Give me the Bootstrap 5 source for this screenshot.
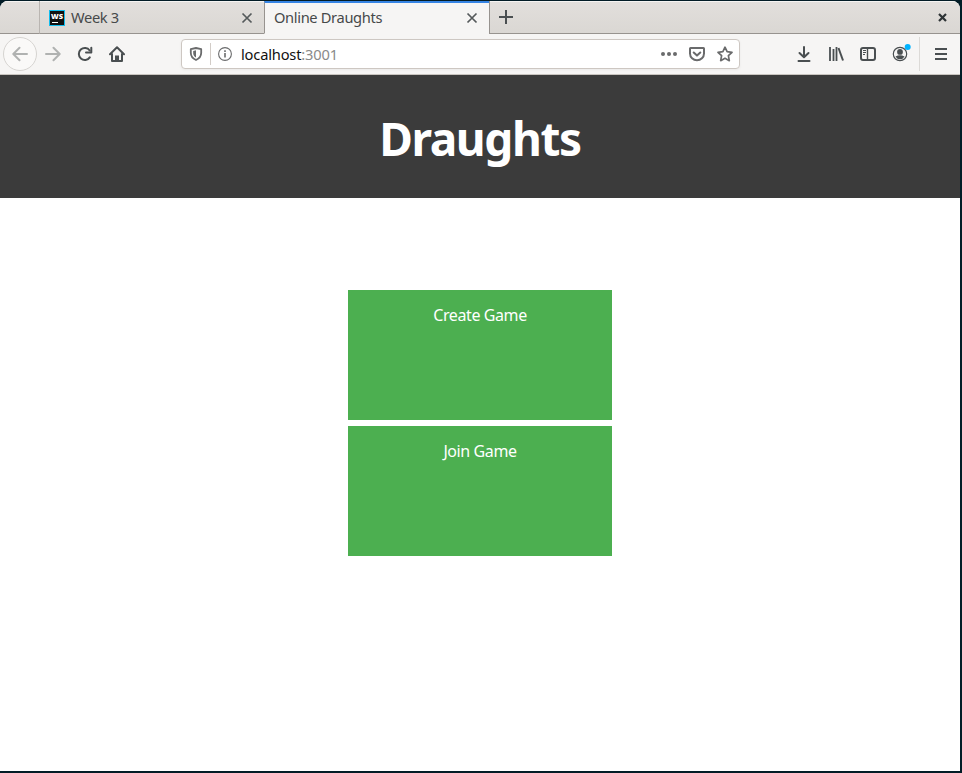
<!DOCTYPE html>
<html lang="en">
<head>
<meta charset="utf-8">
<meta name="viewport" content="width=device-width, initial-scale=1">
<title>Online Draughts</title>
<link rel="stylesheet" href="https://cdn.jsdelivr.net/npm/bootstrap@5.3.0/dist/css/bootstrap.min.css">
<style>
  body { background: #021c26; font-family: "Noto Sans", sans-serif; height: 773px; padding: 1px 2px 2px 0; }
  svg { display: block; flex: none; }
  .window { height: 770px; border-radius: 8px 8px 0 0; background: #fff; }
  .tabstrip { height: 33px; background: linear-gradient(#e2dfdc, #dad7d3); color: #46494a; font-size: 14.67px; box-shadow: inset 0 1px #f5f4f2; }
  .strip-edge { border-bottom: 1px solid #97938f; }
  .lead-space { width: 39px; }
  .tab { width: 225px; padding: 1px 11px 0 9px; border-left: 1px solid #b9b5b1; border-bottom: 1px solid #97938f; }
  .tab-open { padding: 0 11px 0 9px; background: #f6f5f4; border-bottom-color: #f6f5f4; border-left-color: #97938f; border-top: 2px solid #3584e4; }
  .tab-title { line-height: 20px; margin-top: -2px; white-space: nowrap; letter-spacing: -.35px; }
  .tab .tab-icon { margin-right: 6px; }
  .tab-rest { border-left: 1px solid #97938f; padding: 0 13px 0 9px; }
  .toolbar { height: 41px; background: #f6f5f4; border-bottom: 1px solid #c9c5c0; padding-left: 3px; color: #4a4f51; }
  .back { width: 34px; height: 34px; border: 1px solid #d6d4d1; border-radius: 50%; color: #b0b2b1; background: #faf9f8; }
  .slot { width: 32px; }
  .dim { color: #b0b2b1; }
  .urlbar { width: 559px; height: 30px; margin-left: 48px; padding: 0 6px 0 7px; border: 1px solid #cdc7c2; border-radius: 4px; background: #fff; color: #6a6b6c; box-shadow: 0 1px 3px #0000000d; }
  .url-sep { width: 1px; height: 22px; margin: 0 7px; background: #d2ccc7; }
  .url { margin-left: 9px; font-size: 14.67px; line-height: 20px; letter-spacing: -.18px; color: #111; }
  .port { color: #8a8a8a; }
  .pocket { margin: 0 11px; }
  .tools { margin-left: 48px; }
  .menu-sep { width: 1px; height: 34px; background: #dcdad7; margin-left: 3px; }
  .menu-slot { margin-left: 5px; }
  .banner { height: 123px; background: #3b3b3b; }
  .banner h1 { font-size: 46px; line-height: 60px; font-weight: 700; letter-spacing: -1.4px; margin: 2px 0 0; }
  .actions { width: 264px; margin-top: 92px; gap: 6px; }
  .game-btn { height: 130px; padding: 13px 32px; font-size: 16px; line-height: 24px; letter-spacing: -.4px; border: 0; border-radius: 0; background: #4caf50; color: #fff; }
  .game-btn:hover { background: #449f48; color: #fff; }
</style>
</head>
<body class="overflow-hidden">
<div class="window overflow-hidden">
  <div class="tabstrip d-flex">
    <div class="lead-space strip-edge"></div>
    <div class="tab d-flex align-items-center">
      <svg class="tab-icon" width="16" height="16" viewBox="0 0 16 16"><rect width="16" height="16" fill="#10bdef"/><rect x="1" y="1" width="14" height="14" fill="#111"/><text x="2" y="8.6" font-family="Open Sans, sans-serif" font-weight="800" font-size="7.6" textLength="12" lengthAdjust="spacingAndGlyphs" fill="#fff">WS</text><path d="M3 12.5h6" stroke="#fff"/></svg>
      <span class="tab-title">Week 3</span>
      <svg class="ms-auto" width="12" height="12" viewBox="0 0 12 12"><path d="M1.5 1.5l9 9M10.5 1.5l-9 9" stroke="#555a5b" stroke-width="1.7"/></svg>
    </div>
    <div class="tab tab-open d-flex align-items-center">
      <span class="tab-title">Online Draughts</span>
      <svg class="ms-auto" width="12" height="12" viewBox="0 0 12 12"><path d="M1.5 1.5l9 9M10.5 1.5l-9 9" stroke="#555a5b" stroke-width="1.7"/></svg>
    </div>
    <div class="tab-rest strip-edge flex-grow-1 d-flex align-items-center justify-content-between">
      <svg width="14" height="14" viewBox="0 0 14 14"><path d="M7 0v14M0 7h14" stroke="#4a4f51" stroke-width="2"/></svg>
      <svg width="9" height="9" viewBox="0 0 9 9"><path d="M1 1l7 7M8 1L1 8" stroke="#2e3436" stroke-width="2.2"/></svg>
    </div>
  </div>
  <div class="toolbar d-flex align-items-center">
    <div class="back d-flex align-items-center justify-content-center">
      <svg width="16" height="16" viewBox="0 0 16 16" fill="none" stroke="currentColor" stroke-width="2" stroke-linecap="round" stroke-linejoin="round"><path d="M15 8H2M7.5 1.8L1.3 8l6.2 6.2"/></svg>
    </div>
    <div class="slot dim d-flex justify-content-center">
      <svg width="16" height="16" viewBox="0 0 16 16" fill="none" stroke="currentColor" stroke-width="2" stroke-linecap="round" stroke-linejoin="round"><path d="M1 8h13M8.5 1.8L14.7 8l-6.2 6.2"/></svg>
    </div>
    <div class="slot d-flex justify-content-center">
      <svg width="16" height="16" viewBox="0 0 16 16" fill="none" stroke="currentColor" stroke-width="2"><path d="M12.8 11.4A6 6 0 1 1 12.7 4.5" stroke-linecap="round"/><path d="M14.3 1.8V6.6H9" stroke-linecap="round" stroke-linejoin="round"/></svg>
    </div>
    <div class="slot d-flex justify-content-center">
      <svg width="16" height="16" viewBox="0 0 16 16" fill="none" stroke="currentColor" stroke-width="2" stroke-linecap="round" stroke-linejoin="round"><path d="M1 8.3L8 1.3l7 7M3 8v7h10V8"/><path d="M6 15V9.5h4V15z" fill="currentColor" stroke="none"/></svg>
    </div>
    <div class="urlbar d-flex align-items-center">
      <svg width="14" height="14" viewBox="0 0 14 14"><path d="M7 1L1.8 2.2v3.6c0 3.4 2 5.8 5.2 7.2 3.2-1.4 5.2-3.8 5.2-7.2V2.2z" fill="none" stroke="currentColor" stroke-width="1.8" stroke-linejoin="round"/><path d="M7 3.3L4.2 4v2c0 2 1 3.5 2.8 4.5z" fill="currentColor"/></svg>
      <div class="url-sep"></div>
      <svg width="14" height="14" viewBox="0 0 14 14"><circle cx="7" cy="7" r="6.4" fill="none" stroke="currentColor" stroke-width="1.1"/><path d="M7 6v4.500M7 3.300v1.600" stroke="currentColor" stroke-width="1.6"/></svg>
      <span class="url">localhost<span class="port">:3001</span></span>
      <svg class="ms-auto" width="16" height="16" viewBox="0 0 16 16" fill="currentColor"><circle cx="2" cy="8" r="2"/><circle cx="8" cy="8" r="2"/><circle cx="14" cy="8" r="2"/></svg>
      <svg class="pocket" width="18" height="16" viewBox="-1 0 18 16" fill="none" stroke="currentColor" stroke-width="2" stroke-linecap="round" stroke-linejoin="round"><path d="M1.5 2h13q.5 0 .5.6V7.5a7 6.8 0 0 1-14 0V2.600Q1 2 1.500 2z"/><path d="M4.700 6.500L8 9.600l3.300-3.100"/></svg>
      <svg width="16" height="16" viewBox="0 0 16 16" fill="none" stroke="currentColor" stroke-width="1.7" stroke-linejoin="round"><path d="M8 1.200l2.100 4.500 4.900.6-3.600 3.400.9 5L8 12.300l-4.300 2.400.9-5L1 6.300l4.900-.6z"/></svg>
    </div>
    <div class="tools d-flex align-items-center">
      <div class="slot d-flex justify-content-center">
        <svg width="16" height="16" viewBox="0 0 16 16" fill="none" stroke="currentColor" stroke-width="2" stroke-linecap="round" stroke-linejoin="round"><path d="M8 1v10M3.500 7L8 11.300 12.500 7M2.500 15h11"/></svg>
      </div>
      <div class="slot d-flex justify-content-center">
        <svg width="16" height="16" viewBox="0 0 16 16" fill="none" stroke="currentColor" stroke-width="2"><path d="M2 1v14M5.500 3v12M8.500 1v14" stroke-width="1.8"/><path d="M10.500 2L15 14.500"/></svg>
      </div>
      <div class="slot d-flex justify-content-center">
        <svg width="16" height="16" viewBox="0 0 16 16" fill="none" stroke="currentColor" stroke-width="2"><rect x="1" y="2" width="14" height="12" rx="2"/><path d="M7.500 2v12" stroke-width="1.4"/><path d="M3 4.500h3M3 6.500h3M3 8.500h2" stroke-width="1"/></svg>
      </div>
      <div class="slot d-flex justify-content-center">
        <svg width="22" height="20" viewBox="-3 -2 22 20"><circle cx="8" cy="8" r="6.7" fill="none" stroke="currentColor" stroke-width="1.2"/><circle cx="8" cy="5.9" r="2.9" fill="currentColor"/><path d="M3.500 10.400q4.500-2.400 9 0Q11 13.200 8 13.200t-4.500-2.800z" fill="currentColor"/><circle cx="15.7" cy="1" r="3" fill="#00b3ff"/></svg>
      </div>
      <div class="menu-sep"></div>
      <div class="slot menu-slot d-flex justify-content-center">
        <svg width="12" height="12" viewBox="0 0 12 12"><path d="M0 1h12M0 6h12M0 11h12" stroke="currentColor" stroke-width="2"/></svg>
      </div>
    </div>
  </div>
  <header class="banner d-flex align-items-center justify-content-center text-white">
    <h1>Draughts</h1>
  </header>
  <main class="actions d-flex flex-column mx-auto">
    <button type="button" class="game-btn btn d-flex justify-content-center align-items-start">Create Game</button>
    <button type="button" class="game-btn btn d-flex justify-content-center align-items-start">Join Game</button>
  </main>
</div>
<script src="https://cdn.jsdelivr.net/npm/bootstrap@5.3.0/dist/js/bootstrap.bundle.min.js"></script>
</body>
</html>
